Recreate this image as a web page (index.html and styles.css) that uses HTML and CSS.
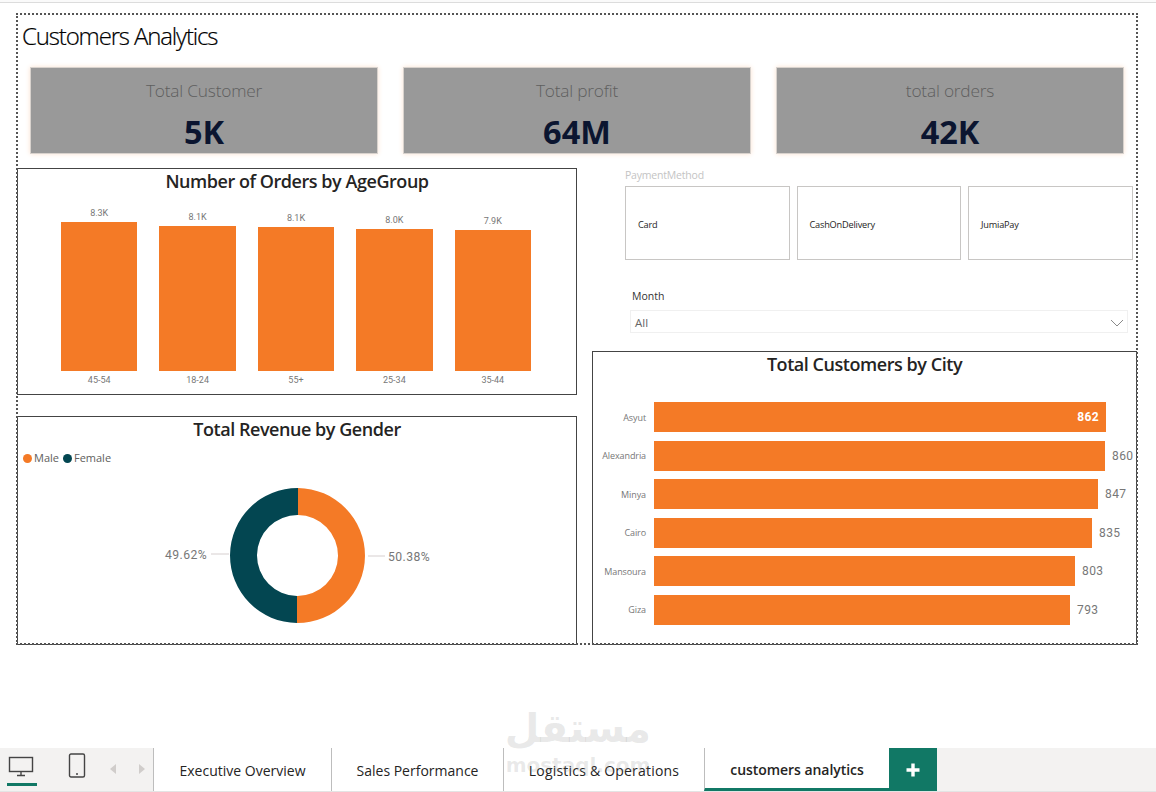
FILE: index.html
```html
<!DOCTYPE html>
<html lang="en">
<head>
<meta charset="utf-8">
<title>Customers Analytics</title>
<link rel="stylesheet" href="styles.css">
</head>
<body>
<div class="app">
  <div class="top-strip"></div>
  <main class="stage">
    <section class="canvas">
      <h1 class="page-title">Customers Analytics</h1>
      <div class="kpi-row">
        <div class="kpi"><div class="kpi-label">Total Customer</div><div class="kpi-value">5K</div></div>
        <div class="kpi"><div class="kpi-label">Total profit</div><div class="kpi-value">64M</div></div>
        <div class="kpi"><div class="kpi-label">total orders</div><div class="kpi-value">42K</div></div>
      </div>
      <div class="columns">
        <div class="col-left">
          <article class="panel panel-age">
            <h2 class="panel-title">Number of Orders by AgeGroup</h2>
            <div class="columns-chart">
              <div class="vbar"><span class="vbar-value">8.3K</span><div class="vbar-fill" style="height:149px"></div><span class="vbar-label">45-54</span></div>
              <div class="vbar"><span class="vbar-value">8.1K</span><div class="vbar-fill" style="height:145px"></div><span class="vbar-label">18-24</span></div>
              <div class="vbar"><span class="vbar-value">8.1K</span><div class="vbar-fill" style="height:144px"></div><span class="vbar-label">55+</span></div>
              <div class="vbar"><span class="vbar-value">8.0K</span><div class="vbar-fill" style="height:142px"></div><span class="vbar-label">25-34</span></div>
              <div class="vbar"><span class="vbar-value">7.9K</span><div class="vbar-fill" style="height:141px"></div><span class="vbar-label">35-44</span></div>
            </div>
          </article>
          <article class="panel panel-gender">
            <h2 class="panel-title">Total Revenue by Gender</h2>
            <div class="legend">
              <span class="legend-item"><i class="dot dot-male"></i>Male</span>
              <span class="legend-item"><i class="dot dot-female"></i>Female</span>
            </div>
            <svg class="donut" width="558" height="160" viewBox="0 0 558 160">
              <path class="slice-female" d="M280 3 A67.5 67.5 0 0 0 279 138 L279 111 A40.5 40.5 0 0 1 280 30 Z"/>
              <path class="slice-male" d="M280 3 A67.5 67.5 0 0 1 279 138 L279 111 A40.5 40.5 0 0 0 280 30 Z"/>
              <line class="leader" x1="193" y1="69" x2="211" y2="69"/>
              <line class="leader" x1="350" y1="71" x2="367" y2="71"/>
              <text class="donut-text" x="147" y="74">49.62%</text>
              <text class="donut-text" x="370" y="76">50.38%</text>
            </svg>
          </article>
        </div>
        <div class="col-right">
          <div class="slicer-label">PaymentMethod</div>
          <div class="chips">
            <div class="chip">Card</div>
            <div class="chip">CashOnDelivery</div>
            <div class="chip">JumiaPay</div>
          </div>
          <div class="month-label">Month</div>
          <div class="dropdown">
            <span>All</span>
            <svg width="14" height="8" viewBox="0 0 14 8"><path class="chev" d="M1 1 L7 7 L13 1"/></svg>
          </div>
          <article class="panel panel-city">
            <h2 class="panel-title">Total Customers by City</h2>
            <div class="hbars">
              <div class="hbar"><span class="hbar-label">Asyut</span><div class="hbar-fill" style="width:452px"><span class="hbar-inside">862</span></div></div>
              <div class="hbar"><span class="hbar-label">Alexandria</span><div class="hbar-fill" style="width:451px"></div><span class="hbar-value">860</span></div>
              <div class="hbar"><span class="hbar-label">Minya</span><div class="hbar-fill" style="width:444px"></div><span class="hbar-value">847</span></div>
              <div class="hbar"><span class="hbar-label">Cairo</span><div class="hbar-fill" style="width:438px"></div><span class="hbar-value">835</span></div>
              <div class="hbar"><span class="hbar-label">Mansoura</span><div class="hbar-fill" style="width:421px"></div><span class="hbar-value">803</span></div>
              <div class="hbar"><span class="hbar-label">Giza</span><div class="hbar-fill" style="width:416px"></div><span class="hbar-value">793</span></div>
            </div>
          </article>
        </div>
      </div>
    </section>
  </main>
  <nav class="tabbar">
    <div class="tools">
      <div class="tool tool-desktop">
        <svg width="26" height="22" viewBox="0 0 26 22"><rect class="ico" x="1.5" y="1.5" width="23" height="14"/><path class="ico" d="M13 16 V20 M9 19.5 H17"/></svg>
      </div>
      <div class="tool tool-phone">
        <svg width="18" height="26" viewBox="0 0 18 26"><rect class="ico-phone" x="1.5" y="1" width="15" height="23" rx="1.5"/><path class="ico" d="M8 21 H10"/></svg>
      </div>
      <div class="arrows">
        <svg width="8" height="12" viewBox="0 0 8 12"><path class="arrow" d="M7 1 V11 L1 6 Z"/></svg>
        <svg width="8" height="12" viewBox="0 0 8 12"><path class="arrow" d="M1 1 V11 L7 6 Z"/></svg>
      </div>
    </div>
    <div class="tab tab-a">Executive Overview</div>
    <div class="tab tab-b">Sales Performance</div>
    <div class="tab tab-c">Logistics &amp; Operations</div>
    <div class="tab tab-d active">customers analytics</div>
    <div class="add-tab"><svg width="14" height="14" viewBox="0 0 14 14"><path class="plus" d="M7 0.5 V13.5 M0.5 7 H13.5"/></svg></div>
  </nav>
  <div class="watermark" aria-hidden="true">
    <div class="wm-ar" dir="rtl" lang="ar">مستقل</div>
    <div class="wm-en">mostaql.com</div>
  </div>
</div>
</body>
</html>
```

FILE: styles.css
```css
* { box-sizing: border-box; }
html, body { margin: 0; padding: 0; }
body { background: #fff; font-family: "Open Sans", "Noto Sans", sans-serif; color: #252423; overflow: hidden; }
.app { position: relative; width: 1156px; height: 792px; display: flex; flex-direction: column; }
.top-strip { height: 3px; background: #fafafa; border-bottom: 1px solid #dcdcdc; flex: none; }
.stage { flex: 1; padding: 10px 0 0 16px; min-height: 0; }

.canvas { position: relative; width: 1122px; height: 632px; }
.canvas::after { content: ""; position: absolute; inset: 0; border: 2px dotted #555; pointer-events: none; }
.page-title { margin: 0; height: 54px; padding: 5px 0 0 6px; font-weight: 300; font-size: 24px; line-height: 36px; letter-spacing: -1.15px; color: #000; -webkit-text-stroke: 0.2px #000; }

.kpi-row { display: flex; gap: 25px; padding-left: 14px; height: 87px; }
.kpi { width: 348px; height: 87px; background: #999; border: 1px solid #d8d2cd; box-shadow: 0 0 5px #fbe3d2; text-align: center; }
.kpi-label { font-size: 17.3px; font-weight: 300; line-height: 24px; padding-top: 11px; height: 42px; color: #5f5f5f; letter-spacing: -0.2px; }
.kpi-value { font-size: 32.5px; font-weight: 700; line-height: 44px; color: #0b1530; }

.columns { display: grid; grid-template-columns: 576px 546px; margin-top: 14px; height: 478px; }
.col-left { display: flex; flex-direction: column; gap: 21px; margin-left: 1px; width: 560px; }

.panel { border: 1px solid #444; background: #fff; }
.panel-title { margin: 0; text-align: center; font-size: 18px; font-weight: 600; line-height: 24px; letter-spacing: -0.45px; color: #252423; }
.panel-age { height: 227px; }
.panel-gender { height: 229px; }

.columns-chart { display: flex; gap: 22px; padding: 12px 0 0 43px; height: 193px; align-items: flex-end; }
.vbar { width: 76.4px; display: flex; flex-direction: column; align-items: center; }
.vbar-value { font-size: 9px; line-height: 12px; color: #777; margin-bottom: 3px; font-family: Roboto, sans-serif; }
.vbar-fill { width: 100%; background: #f47a26; }
.vbar-label { font-size: 9px; line-height: 12px; margin-top: 3px; color: #777; font-family: Roboto, sans-serif; }

.legend { display: flex; gap: 4px; padding: 4px 0 0 5px; height: 30px; font-size: 11px; line-height: 18px; color: #605e5c; }
.legend-item { display: inline-flex; align-items: center; gap: 2px; }
.dot { width: 9px; height: 9px; border-radius: 50%; display: block; }
.dot-male { background: #f47a26; }
.dot-female { background: #034651; }
.donut { display: block; margin-top: 14px; }
.slice-male { fill: #f47a26; }
.slice-female { fill: #034651; }
.leader { stroke: #d6cfcf; stroke-width: 1; }
.donut-text { font-family: Roboto, sans-serif; font-size: 12.2px; letter-spacing: 0.45px; fill: #777; }

.col-right { display: flex; flex-direction: column; }
.slicer-label { margin: 0 0 0 33px; height: 18px; font-size: 10.5px; line-height: 14px; color: #c4c4c4; letter-spacing: -0.2px; }
.chips { display: flex; gap: 7px; padding-left: 33px; height: 74px; }
.chip { width: 164.5px; height: 74px; border: 1px solid #c8c6c4; display: flex; align-items: center; padding: 2px 0 0 12px; font-size: 9.2px; color: #252423; letter-spacing: -0.2px; }
.month-label { margin: 28px 0 0 40px; height: 22px; font-size: 10.5px; line-height: 16px; color: #333; }
.dropdown { margin-left: 38px; width: 498px; height: 23px; border: 1px solid #f0f0f0; display: flex; align-items: center; justify-content: space-between; padding: 2px 3px 0 4px; font-size: 11.5px; color: #666; }
.chev { fill: none; stroke: #8a8a8a; stroke-width: 1; }

.panel-city { margin-top: 18px; height: 294px; width: 545px; }
.hbars { display: flex; flex-direction: column; gap: 8.6px; padding-top: 26px; }
.hbar { display: flex; align-items: center; height: 30px; }
.hbar-label { width: 53px; text-align: right; font-size: 9px; color: #777; margin-right: 8px; letter-spacing: -0.1px; flex: none; }
.hbar-fill { height: 30px; background: #f47a26; flex: none; display: flex; align-items: center; justify-content: flex-end; padding-right: 7px; }
.hbar-inside { color: #fff; font-family: Roboto, sans-serif; font-weight: 700; font-size: 12px; letter-spacing: 0.4px; }
.hbar-value { margin-left: 7px; color: #777; font-family: Roboto, sans-serif; font-size: 12px; letter-spacing: 0.4px; }

.tabbar { height: 44px; flex: none; display: flex; background: #f3f2f1; border-bottom: 1px solid #e4e4e4; font-size: 14px; color: #252423; }
.tools { width: 153px; display: flex; align-items: flex-start; flex: none; }
.tool { flex: none; }
.tool-desktop { width: 30px; height: 38px; margin-left: 7px; padding: 8px 0 0 1px; border-bottom: 3px solid #117865; }
.tool-phone { margin-left: 31px; padding-top: 5px; }
.ico { fill: none; stroke: #444; stroke-width: 1.4; }
.ico-phone { fill: none; stroke: #444; stroke-width: 1.4; }
.arrows { display: flex; gap: 21px; margin-left: 23px; padding-top: 15px; }
.arrow { fill: #d0cdcb; }
.tab { background: #fff; display: flex; align-items: center; justify-content: center; border-left: 1px solid #bdbdbd; height: 43px; flex: none; padding-top: 2px; }
.tab-a { width: 178px; }
.tab-b { width: 172px; }
.tab-c { width: 201px; letter-spacing: 0.2px; }
.tab-d { width: 185px; font-weight: 600; border-bottom: 3px solid #117865; padding-top: 3px; letter-spacing: -0.05px; }
.add-tab { width: 48px; background: #117865; display: flex; align-items: center; justify-content: center; height: 43px; flex: none; }
.plus { stroke: #fff; stroke-width: 3.4; fill: none; }

.watermark { position: absolute; left: 500px; top: 702px; width: 156px; text-align: center; pointer-events: none; color: rgba(120,120,120,0.17); }
.wm-ar { font-family: "DejaVu Sans", sans-serif; font-weight: 700; font-size: 40px; line-height: 52px; height: 52px; }
.wm-en { font-family: "DejaVu Sans", sans-serif; font-weight: 700; font-size: 20px; line-height: 22px; }
```
